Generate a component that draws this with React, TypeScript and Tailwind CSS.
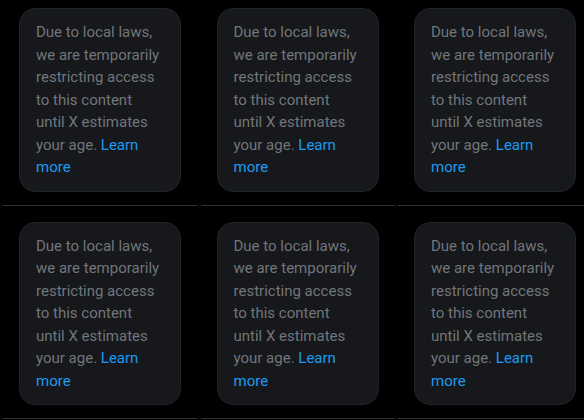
import React from "react";

function Card() {
  return (
    <div className="ml-4 w-[162px] rounded-2xl border border-[#202327] bg-[#16181c] px-4 py-3">
      <p
        className="whitespace-nowrap text-[15px] leading-[22.5px] text-[#71767b]"
        style={{ fontFamily: "Roboto, 'Noto Sans', sans-serif" }}
      >
        Due to local laws,
        <br />
        we are temporarily
        <br />
        restricting access
        <br />
        to this content
        <br />
        until X estimates
        <br />
        your age. <span className="text-[#1d9bf0]">Learn</span>
        <br />
        <span className="text-[#1d9bf0]">more</span>
      </p>
    </div>
  );
}

function Cell() {
  return (
    <div className="w-[194px] shrink-0">
      <div className="pt-4 pb-[13px]">
        <Card />
      </div>
      <div className="h-px bg-[#2f3336]" />
    </div>
  );
}

export default function App() {
  return (
    <div className="h-[420px] w-[584px] overflow-hidden bg-black">
      <div className="-mt-2 flex flex-col">
        {[0, 1].map((r) => (
          <div key={r} className="flex gap-[3.5px] pl-[3px]">
            <Cell />
            <Cell />
            <Cell />
          </div>
        ))}
      </div>
    </div>
  );
}
